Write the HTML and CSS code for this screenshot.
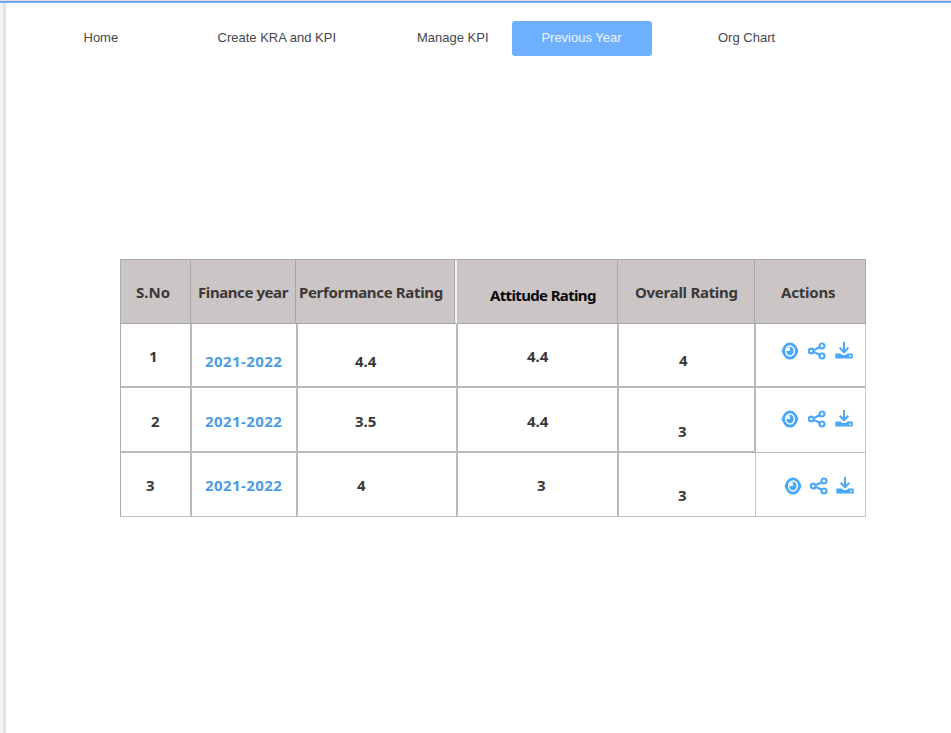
FILE: index.html
```html
<!DOCTYPE html>
<html lang="en">
<head>
<meta charset="utf-8">
<title>Previous Year</title>
<link rel="stylesheet" href="styles.css">
</head>
<body>
<svg class="sprite" aria-hidden="true">
  <symbol id="eye" viewBox="0 0 18 18">
    <path fill="#4aa8f8" d="M9 .4C13 .4 15.300 3.200 17.500 9 15.300 14.800 13 17.600 9 17.600S2.700 14.800.5 9C2.700 3.200 5 .4 9 .4Z"/>
    <ellipse cx="9" cy="9" rx="4.300" ry="4.900" fill="none" stroke="#fff" stroke-width="1.500"/>
    <path fill="#fff" d="M5.500 5.500H9v2.700c0 .5-.3.800-.8.800H5Z"/>
  </symbol>
  <symbol id="share" viewBox="0 0 18 18">
    <g fill="none" stroke="#4aa8f8" stroke-width="2.2">
      <path d="m6 8 5.500-2.700M6 10l5.500 2.700"/>
      <circle cx="3.200" cy="9" r="2.400"/><circle cx="14" cy="4" r="2.500"/><circle cx="14" cy="14" r="2.500"/>
    </g>
  </symbol>
  <symbol id="download" viewBox="0 0 18 18">
    <path fill="#4aa8f8" d="M.3 11.500h5.200l2.100 1.600h2.800l2.100-1.600h5.200v5H.3Z"/>
    <path fill="none" stroke="#4aa8f8" stroke-width="2" d="M9 0v10M4.700 5.800 9 10.300l4.300-4.500"/>
    <circle cx="15" cy="14.200" r=".9" fill="#fff"/>
  </symbol>
</svg>
<div class="app">
  <nav class="nav">
    <a class="home">Home</a>
    <a class="create">Create KRA and KPI</a>
    <a class="manage">Manage KPI</a>
    <a class="active">Previous Year</a>
    <a class="org">Org Chart</a>
  </nav>
  <main class="table">
    <div class="row head">
      <div class="c1"><span>S.No</span></div>
      <div class="c2"><span>Finance year</span></div>
      <div class="c3"><span>Performance Rating</span></div>
      <div class="c4"><span class="dark">Attitude Rating</span></div>
      <div class="c5"><span>Overall Rating</span></div>
      <div class="c6"><span>Actions</span></div>
    </div>
    <div class="row r1">
      <div class="c1"><span>1</span></div>
      <div class="c2"><span>2021-2022</span></div>
      <div class="c3"><span>4.4</span></div>
      <div class="c4"><span>4.4</span></div>
      <div class="c5"><span>4</span></div>
      <div class="c6"><svg><use href="#eye"/></svg><svg><use href="#share"/></svg><svg><use href="#download"/></svg></div>
    </div>
    <div class="row r2">
      <div class="c1"><span>2</span></div>
      <div class="c2"><span>2021-2022</span></div>
      <div class="c3"><span>3.5</span></div>
      <div class="c4"><span>4.4</span></div>
      <div class="c5"><span>3</span></div>
      <div class="c6"><svg><use href="#eye"/></svg><svg><use href="#share"/></svg><svg><use href="#download"/></svg></div>
    </div>
    <div class="row r3">
      <div class="c1"><span>3</span></div>
      <div class="c2"><span>2021-2022</span></div>
      <div class="c3"><span>4</span></div>
      <div class="c4"><span>3</span></div>
      <div class="c5"><span>3</span></div>
      <div class="c6"><svg><use href="#eye"/></svg><svg><use href="#share"/></svg><svg><use href="#download"/></svg></div>
    </div>
  </main>
</div>
</body>
</html>
```

FILE: styles.css
```css
* { box-sizing: border-box; }
body { margin: 0; background: #fff; overflow: hidden; }
.sprite { display: none; }
.app {
  height: 733px;
  border-top: 1px solid #dedfe0;
  background:
    linear-gradient(#6d9ddb 0 1px, #6eb0ff 1px 2px) 0 0 / 100% 2px no-repeat,
    linear-gradient(90deg, #f3f3f3 0 3px, #e3e3e3 3px 6px, transparent 6px);
}
.nav {
  display: flex;
  height: 258px;
  padding: 20px 0 0 83.5px;
  font: 13px/34px "Liberation Sans", Arial, sans-serif;
  color: #44474e;
}
.nav a { height: 35px; white-space: nowrap; }
.home { width: 134px; }
.create { width: 199.5px; }
.manage { width: 95px; }
.active { width: 140px; padding-right: 1px; border-radius: 3px; background: #6eb0ff; color: #edf5ff; text-align: center; }
.org { margin-left: 66px; }
.table {
  width: 746px;
  margin-left: 120px;
  border: solid #acacac;
  border-width: 1px 0 0 1px;
  font: bold 15px/20px "Noto Sans", "Open Sans", sans-serif;
  color: #3b3838;
}
.row { display: grid; grid-template-columns: 71px 106px 160px 161px 137px 110px; height: 64px; }
.row > div { border: solid #b9b9b9; border-width: 0 2px 2px 0; padding-top: 22px; white-space: nowrap; }
.row span { display: block; }
.row .c6 { border-right: 1px solid #c8c8c8; }
.head { grid-template-columns: 70px 105px 161px 161px 137px 111px; }
.row.head > div { background: #cbc5c5; border-width: 0 1px 1px 0; border-color: #a8a5a5; }
.row.head .c3 { border-right: 2px solid #f3f0f0; box-shadow: inset -1px 0 #aaa7a7; }
.head .c1 { padding-left: 15px; }
.head .c2 { padding-left: 7px; letter-spacing: -.42px; }
.head .c3 { padding-left: 3px; letter-spacing: -.33px; }
.row.head .c4 { padding: 25px 0 0 33px; letter-spacing: -.65px; }
.head .c5 { padding-left: 17px; letter-spacing: -.28px; }
.head .c6 { padding-left: 26px; letter-spacing: -.2px; }
.dark { color: #080808; }
.row:not(.head) .c2 { color: #4b9ee5; padding-left: 13px; letter-spacing: .43px; }
.row:not(.head) .c4 { padding-left: 69px; }
.r1 .c1 { padding-left: 28px; }
.row.r1 .c2, .row.r1 .c3 { padding-top: 27px; }
.r1 .c3 { padding-left: 57px; }
.row.r1 .c5 { padding: 26px 0 0 60px; }
.r2 { height: 65px; }
.row.r2 > div { padding-top: 23px; }
.r2 .c1 { padding-left: 30px; }
.r2 .c3 { padding-left: 57px; }
.row.r2 .c5 { padding: 33px 0 0 59px; }
.r3 .c1 { padding-left: 25px; }
.r3 .c3 { padding-left: 59px; }
.row.r3 .c4 { padding-left: 79px; }
.row.r3 .c5 { padding: 32px 0 0 59px; }
.row.r3 > div { border-bottom: 1px solid #c0c0c0; }
.row.r3 .c5 { border-right: 1px solid #c8c8c8; }
.row:not(.head) .c6 { display: flex; gap: 9px; padding: 18px 0 0 25px; }
.row.r2 .c6 { padding-top: 22px; border-bottom-width: 1px; }
.row.r3 .c6 { gap: 8px; padding: 24px 0 0 28px; }
.c6 svg { width: 18px; height: 18px; }
```
